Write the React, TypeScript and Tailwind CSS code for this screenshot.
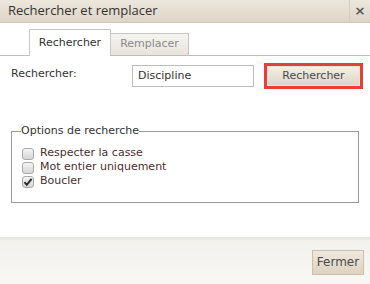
import React from "react";

function Box({ checked }: { checked?: boolean }) {
  return (
    <span className="relative inline-flex shrink-0 items-center justify-center w-[12px] h-[12px] rounded-[3px] border border-[#a9a9a9] bg-gradient-to-b from-[#f4f4f4] to-[#d6d6d6] mr-[6px]">
      {checked && (
        <svg width="10" height="10" viewBox="0 0 10 10" className="absolute">
          <path d="M1.5 5.2 L3.8 7.8 L8.6 1.8" stroke="#2b2b2b" strokeWidth="2" fill="none" />
        </svg>
      )}
    </span>
  );
}

function Option({ label, checked }: { label: string; checked?: boolean }) {
  return (
    <label className="flex items-center h-[14px] whitespace-nowrap text-[11px] font-['DejaVu_Sans',sans-serif] text-[#4b2f2f]">
      <Box checked={checked} />
      <span>{label}</span>
    </label>
  );
}

export default function App() {
  return (
    <div className="w-[370px] h-[284px] bg-white flex flex-col text-[11px] text-[#333] font-['DejaVu_Sans',sans-serif] overflow-hidden">
      {/* title bar */}
      <div className="h-[23px] flex items-center border-b border-[#cfc6b6] bg-gradient-to-b from-[#ede7dd] to-[#ddd4c5]">
        <span className="flex-1 pl-[8px] text-[13px] text-[#333] font-['Open_Sans',sans-serif]">Rechercher et remplacer</span>
        <span className="h-full w-[21px] border-l border-[#d4ccbe] flex items-center justify-center text-[#555] text-[13px] font-bold">×</span>
      </div>

      {/* tabs */}
      <div className="flex items-end mt-[6px] h-[27px]">
        <div className="w-[29px] h-full border-b border-[#bdbdbd]" />
        <div className="w-[82px] h-full border border-b-0 border-[#c6c6c6] bg-white flex items-center justify-center text-[#333] pt-[1px]">
          Rechercher
        </div>
        <div className="w-[78px] h-[23px] border border-l-0 border-[#c6c6c6] border-b-[#bdbdbd] bg-gradient-to-b from-[#f6f4f0] to-[#e8e4dc] flex items-center justify-center text-[#8a8a8a]">
          Remplacer
        </div>
        <div className="flex-1 h-full border-b border-[#bdbdbd]" />
      </div>

      {/* search row */}
      <div className="flex items-center mt-[7px] h-[26px]">
        <span className="w-[132px] shrink-0 pl-[11px] -mt-[4px]">Rechercher:</span>
        <div className="w-[122px] h-[22px] border border-[#bdbdbd] flex items-center pl-[5px] text-[#333]">Discipline</div>
        <div className="ml-[10px] w-[99px] h-[26px] border-[3px] border-[#e53f3a]">
          <div className="w-full h-full border border-[#e8e1d4] bg-gradient-to-b from-[#f3efe7] to-[#ddd5c6] flex items-center justify-center text-[#4a4a4a]">
            Rechercher
          </div>
        </div>
      </div>

      {/* options */}
      <fieldset className="mx-[11px] mt-[34px] h-[80px] border border-[#9a9a9a] pl-[10px] pt-[7px]">
        <legend className="text-[#333] -ml-[1px]">Options de recherche</legend>
        <div className="flex flex-col">
          <Option label="Respecter la casse" />
          <Option label="Mot entier uniquement" />
          <Option label="Boucler" checked />
        </div>
      </fieldset>

      {/* footer */}
      <div className="mt-auto h-[47px] border-t-[3px] border-[#ebe8e2] bg-gradient-to-b from-[#f3f1ec] to-[#f8f7f3] flex items-center justify-end pr-[6px]">
        <div className="w-[52px] h-[25px] border border-[#cdbfa8] bg-gradient-to-b from-[#efe9dd] to-[#dcd2c0] flex items-center justify-center text-[12px] text-[#4a4a4a]">
          Fermer
        </div>
      </div>
    </div>
  );
}
